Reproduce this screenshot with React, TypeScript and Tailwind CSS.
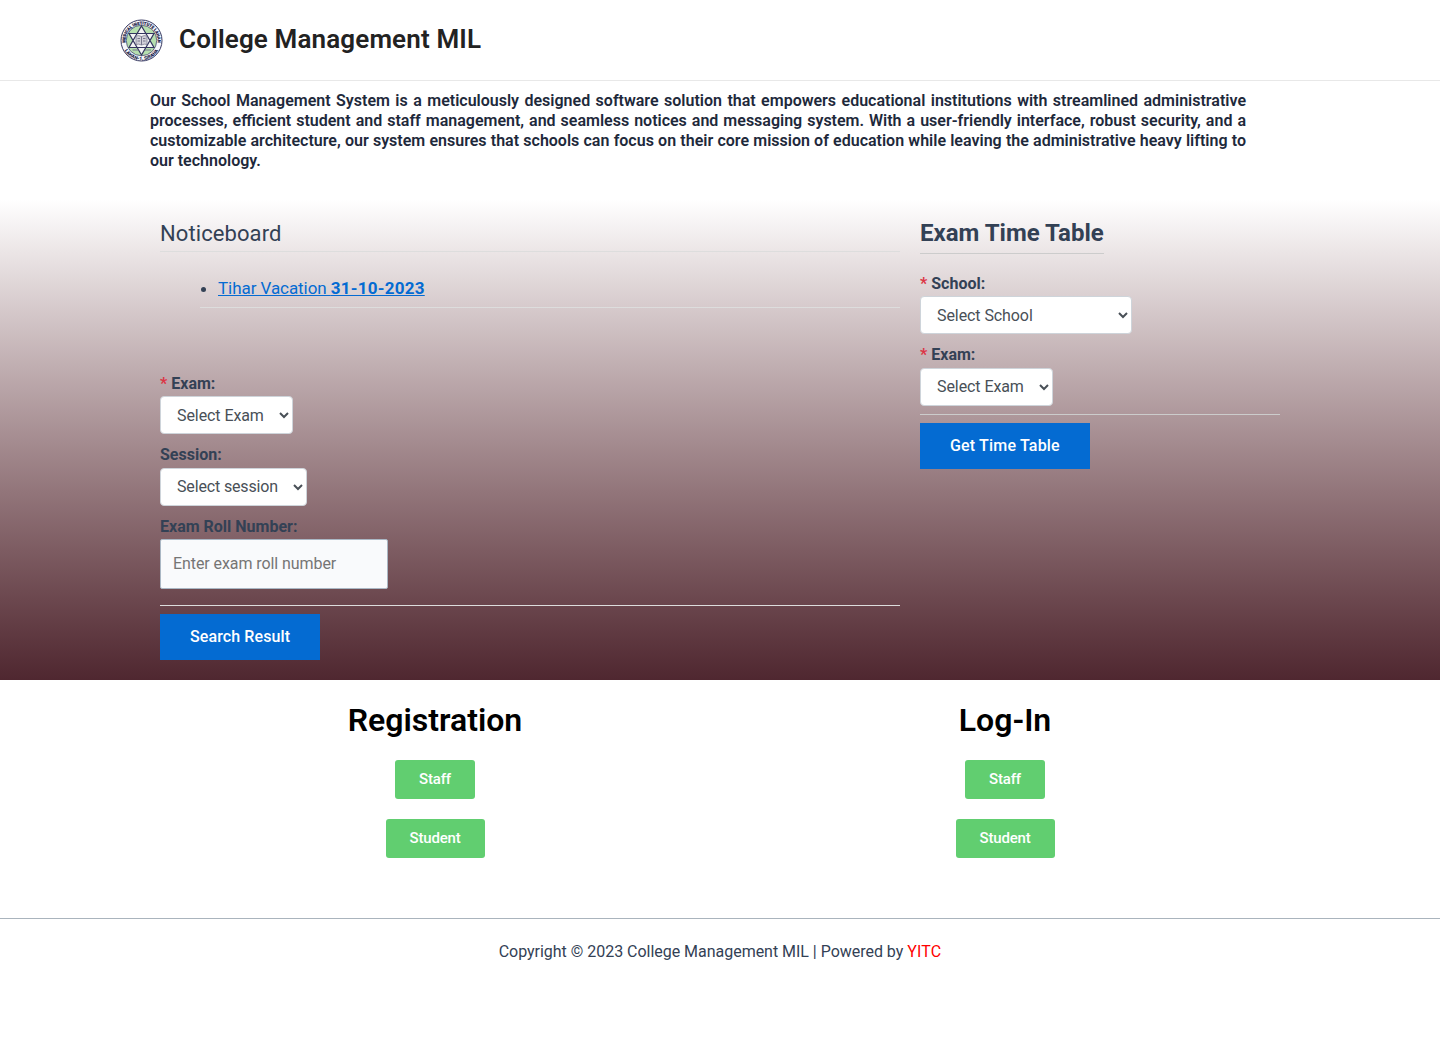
import React from "react";

function Logo() {
  return (
    <svg className="h-[43px] w-[43px] shrink-0" viewBox="0 0 86 86" role="img" aria-label="College seal">
      <defs>
        <path id="seal-top" d="M11 47a32.2 32.2 0 1 1 64 0" />
        <path id="seal-bottom" d="M3.8 43a39.2 39.2 0 0 0 78.4 0" />
      </defs>
      <circle cx="43" cy="43" r="41" fill="#f6f7fb" stroke="#34365f" strokeWidth="2" />
      <circle cx="43" cy="43" r="30.5" fill="#b5dfae" stroke="#4b4d72" strokeWidth="1.6" />
      <path d="M43 14 68 57H18ZM43 72 18 29H68Z" fill="#f4f5f5" stroke="#34365f" strokeWidth="2.4" />
      <path d="M32 34q5-2 11 1q6-3 11-1v17q-5-2-11 1q-6-3-11-1Z" fill="#d0d0d8" stroke="#77778d" strokeWidth="1.5" />
      <path d="M43 35v17M35 39h5M46 39h5M35 44h5M46 44h5M25 62h12M50 62h12" stroke="#77778d" strokeWidth="2" />
      <g fill="#202248" fontFamily="Roboto, sans-serif" fontWeight="900">
        <text fontSize="8.3" stroke="#202248" strokeWidth="0.3"><textPath href="#seal-top" startOffset="50%" textAnchor="middle">MEDICAL INSTITUTE LAHAN</textPath></text>
        <text fontSize="9.5"><textPath href="#seal-bottom" startOffset="50%" textAnchor="middle">LAHAN-1, SIRAHA</textPath></text>
      </g>
    </svg>
  );
}

const selectClass =
  "block h-[38px] rounded border border-[#ced4da] bg-white px-3 py-1.5 text-base leading-6 text-[#495057]";

function Label({ required, children }: { required?: boolean; children: React.ReactNode }) {
  return (
    <label className="block h-[25.6px] text-base leading-[25.6px] font-bold">
      {required && <span className="text-[#dc3545]">* </span>}
      {children}
    </label>
  );
}

function SubmitButton({ className, children }: { className: string; children: React.ReactNode }) {
  return (
    <button type="button" className={`block h-[46px] bg-[#046bd2] pl-[30px] text-left text-base leading-4 font-medium whitespace-nowrap text-white ${className}`}>
      {children}
    </button>
  );
}

function AccessPanel({ title }: { title: string }) {
  return (
    <section className="flex w-[570px] flex-col items-center gap-5">
      <h2 className="h-10 text-[32px] leading-10 font-semibold text-black">{title}</h2>
      {["Staff", "Student"].map((name) => (
        <a key={name} href="#" className="h-[39px] rounded-[3px] bg-[#61ce70] px-6 py-3 text-[15px] leading-[15px] font-medium tracking-[-0.18px] text-white">
          {name}
        </a>
      ))}
    </section>
  );
}

export default function App() {
  return (
    <div className="min-h-[1039px] bg-white font-['Roboto',sans-serif] text-base text-[#334155]">
      <header className="h-[81px] border-b border-[#e8e8e8] pl-[120px]">
        <div className="flex h-20 items-center gap-4">
          <Logo />
          <a href="#" className="pb-0.5 text-[26px] leading-8 font-semibold tracking-[0.14px] text-[#222]">College Management MIL</a>
        </div>
      </header>
      <div className="h-[119px] pt-[10px] pl-[150px]">
        <p className="w-[1096px] text-justify text-base leading-5 font-semibold text-[#1e293b]">
          Our School Management System is a meticulously designed software solution that empowers educational institutions with streamlined administrative processes, efficient student and staff management, and seamless notices and messaging system. With a user-friendly interface, robust security, and a customizable architecture, our system ensures that schools can focus on their core mission of education while leaving the administrative heavy lifting to our technology.
        </p>
      </div>
      <main className="flex h-[480px] gap-5 bg-linear-to-b from-white to-[#4f2730] px-40 pt-5">
        <div className="w-[740px]">
          <h3 className="h-8 border-b border-[#ddd] text-[22px] leading-[27px] tracking-[0.09px]">Noticeboard</h3>
          <ul className="mt-5 ml-10 h-9 border-b border-[#ddd] text-[17px] leading-8">
            <li className="ml-[18px] list-disc">
              <a href="#" className="tracking-[-0.06px] text-[#046bd2] underline">Tihar Vacation <span className="font-bold tracking-[0.25px]">31-10-2023</span></a>
            </li>
          </ul>
          <form className="pt-[62.55px]">
            <Label required>Exam:</Label>
            <select className={`${selectClass} w-[133px] tracking-[-0.08px]`}><option>Select Exam</option></select>
            <div className="h-2" />
            <Label>Session:</Label>
            <select className={`${selectClass} w-[147px] tracking-[-0.15px]`}><option>Select session</option></select>
            <div className="h-2" />
            <Label>Exam Roll Number:</Label>
            <input placeholder="Enter exam roll number" className="block h-[50px] w-[228px] rounded-[2px] border border-[#aab7c4] bg-[#f9fafc] px-3 pb-0.5 text-base tracking-[-0.08px] placeholder:text-[#757575]" />
            <div className="mt-4 mb-2 h-px bg-[#ddd]" />
            <SubmitButton className="w-40 tracking-[0.1px]">Search Result</SubmitButton>
          </form>
        </div>
        <div className="w-[360px]">
          <h3 className="h-[34px] w-fit border-b border-[#ccc] text-2xl leading-[27px] font-bold">Exam Time Table</h3>
          <form className="pt-[16.55px]">
            <Label required>School:</Label>
            <select className={`${selectClass} w-[212px] tracking-[-0.08px]`}><option>Select School</option></select>
            <div className="h-2" />
            <Label required>Exam:</Label>
            <select className={`${selectClass} w-[133px] tracking-[-0.08px]`}><option>Select Exam</option></select>
            <div className="my-2 h-px bg-[#ccc]" />
            <SubmitButton className="w-[170px] tracking-[0.18px]">Get Time Table</SubmitButton>
          </form>
        </div>
      </main>
      <div className="flex h-[238px] pt-5 pl-[150px]">
        <AccessPanel title="Registration" />
        <AccessPanel title="Log-In" />
      </div>
      <footer className="border-t border-[#aab4bd] pt-5 text-center leading-[26px]">
        <span className="tracking-[-0.025px]">Copyright © 2023 College Management MIL | Powered by </span><a href="#" className="tracking-[0.15px] text-[#f00]">YITC</a>
      </footer>
    </div>
  );
}
